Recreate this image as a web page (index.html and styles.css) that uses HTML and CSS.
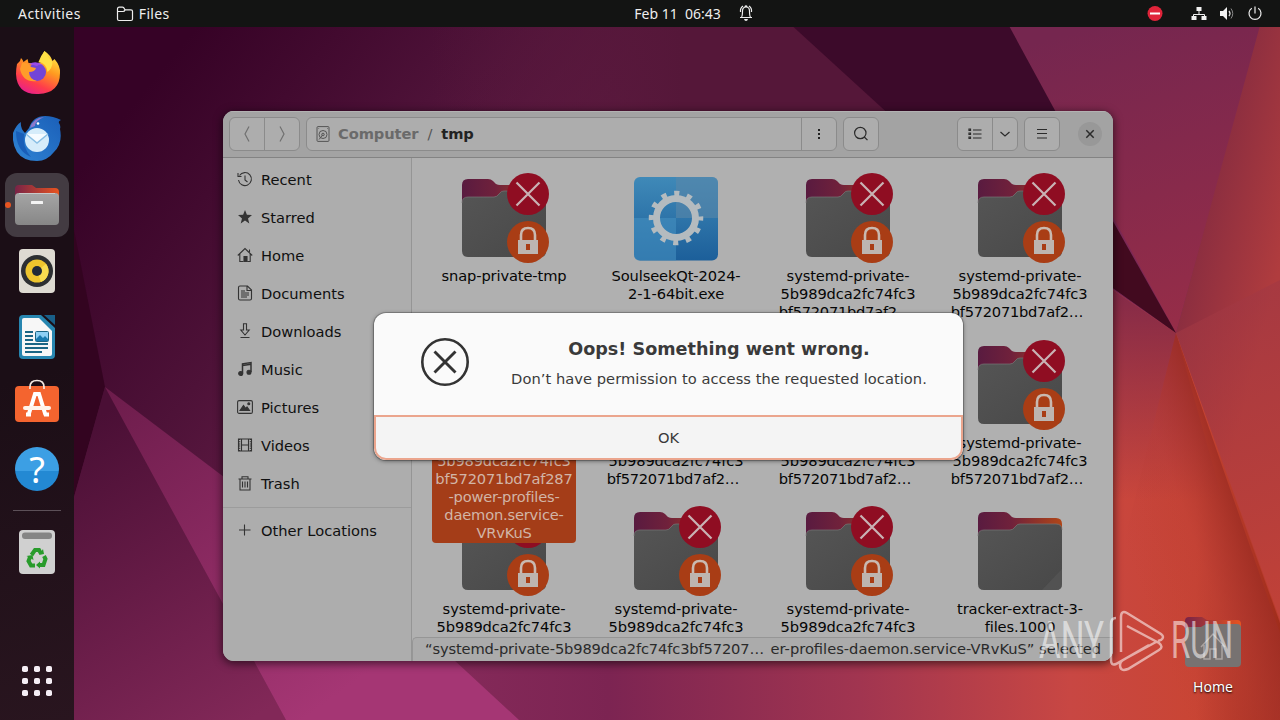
FILE: index.html
```
<!DOCTYPE html>
<html lang="en">
<head>
<meta charset="UTF-8">
<title>Files</title>
<link rel="stylesheet" href="styles.css">
</head>
<body>

<!-- shared icons -->
<svg class="defs" width="0" height="0">
	<defs>
		<linearGradient id="tab" x1="0" x2="1"><stop offset="0" stop-color="#591b40"/><stop offset=".4" stop-color="#70213b"/><stop offset="1" stop-color="#b04618"/></linearGradient>
		<linearGradient id="front" x1="0" y1="0" x2="1" y2="1"><stop offset="0" stop-color="#555"/><stop offset="1" stop-color="#484848"/></linearGradient>
		<linearGradient id="exebg" x1="0" y1="0" x2="0" y2="1"><stop offset="0" stop-color="#3f89b8"/><stop offset="1" stop-color="#1c5f9a"/></linearGradient>
		<linearGradient id="fox" x1=".8" y1="0" x2=".3" y2="1"><stop offset="0" stop-color="#fff04a"/><stop offset=".4" stop-color="#ff9a20"/><stop offset=".75" stop-color="#ff3d4a"/><stop offset="1" stop-color="#e8208a"/></linearGradient>
		<linearGradient id="bird" x1="1" y1="0" x2="0" y2="1"><stop offset="0" stop-color="#1b5fb8"/><stop offset="1" stop-color="#2f84d4"/></linearGradient>
		<linearGradient id="drawer" x1="0" y1="0" x2="0" y2="1"><stop offset="0" stop-color="#a5a5a5"/><stop offset="1" stop-color="#878787"/></linearGradient>
		<linearGradient id="drawertab" x1="0" x2="1"><stop offset="0" stop-color="#782347"/><stop offset="1" stop-color="#e85420"/></linearGradient>
	</defs>
	<symbol id="folder" viewBox="0 0 96 96">
		<path d="M6 15q0-6 6-6h20q3 0 5 2l3 3q2 1 4 1h40q6 0 6 6v20H6z" fill="url(#tab)"/>
		<path d="M6 33q0-6 6-6h26q3 0 5-3l1-1q1-2 4-2h36q6 0 6 6v54q0 6-6 6H12q-6 0-6-6z" fill="url(#front)"/>
		<path d="M90 66v15q0 6-6 6H70z" fill="#585858" opacity=".6"/>
		<path d="M6 33q0-6 6-6h26q3 0 5-3l1-1q1-2 4-2h36q6 0 6 6" fill="none" stroke="#777" stroke-width=".7"/>
	</symbol>
	<symbol id="locked" viewBox="0 0 96 96">
		<use href="#folder"/>
		<circle cx="72" cy="24" r="21" fill="#8f0d22"/>
		<path d="M60.500 12.500l23 23M83.500 12.500l-23 23" stroke="#c9b3b5" stroke-width="2.200"/>
		<circle cx="72" cy="72" r="21" fill="#a93d15"/>
		<path d="M65 72v-7q0-7 7-7t7 7v7" fill="none" stroke="#c9b9b0" stroke-width="2.600"/>
		<path fill-rule="evenodd" d="M62 70h20v14H62zM70 74v6h4v-6z" fill="#bdb5b0"/>
	</symbol>
	<symbol id="exe" viewBox="0 0 96 96">
		<rect x="6" y="7" width="84" height="83.500" rx="6" fill="url(#exebg)"/>
		<path d="M48 7h36q6 0 6 6v35H48z" fill="#5a87a8" opacity=".6"/>
		<path d="M6 48h42v42.500H12q-6 0-6-6z" fill="#458fc0" opacity=".6"/>
		<circle cx="48" cy="48" r="19.500" fill="none" stroke="#b4bbbf" stroke-width="7"/>
		<circle cx="48" cy="48" r="24.500" fill="none" stroke="#b4bbbf" stroke-width="5.500" stroke-dasharray="5.200 7.630" stroke-dashoffset="2.600"/>
	</symbol>
	<symbol id="recent" viewBox="0 0 16 16"><path d="M2.500 4.500A6.500 6.500 0 1 1 1.500 9M1 2v3.500h3.500M8 4.500V9l2.500 2"/></symbol>
	<symbol id="star" viewBox="0 0 16 16"><path fill="#333" stroke="none" d="M8 1l1.900 4.800 5.100.3-4 3.300 1.300 5L8 11.600l-4.300 2.800 1.300-5-4-3.300 5.100-.3z"/></symbol>
	<symbol id="house" viewBox="0 0 16 16"><path d="M.8 8.500L8 1.500l7.200 7M12.500 5V2.500M2.800 7v7.500H6.500M13.200 7v7.500h-3"/><path d="M7 9.500h3v5H7z" fill="#333"/></symbol>
	<symbol id="doc" viewBox="0 0 16 16"><path d="M1.500 2.500q0-1.500 1.500-1.500h7.500l4 4v8.500q0 1.500-1.500 1.500H3q-1.500 0-1.500-1.500zM10 1v4.500h4.500M4 6h4M4 8h8M4 10h8M4 12h6"/></symbol>
	<symbol id="down" viewBox="0 0 16 16"><path d="M6.500.8h3V7h2.700L8 12 3.800 7h2.700zM3.500 14.500h9"/></symbol>
	<symbol id="music" viewBox="0 0 16 16"><path d="M5.500 12.500V2.800L14 1.500v9.500M5.500 4.500L14 3.200" stroke-width="1.500"/><circle cx="3.700" cy="12.500" r="2" fill="#333"/><circle cx="12" cy="11.200" r="2" fill="#333"/></symbol>
	<symbol id="picture" viewBox="0 0 16 16"><rect x=".6" y="1.600" width="14.800" height="12.800" rx="1.500"/><path d="M3 11.500l3.500-5 2.200 3L10 8l2.500 3.500z" fill="#333"/><circle cx="11.800" cy="4.800" r="1" fill="#333"/></symbol>
	<symbol id="video" viewBox="0 0 16 16"><path d="M1.500 2h13v12h-13zM4.500 2v12M11.500 2v12M4.500 8h7"/><path d="M2.500 2v12M13.500 2v12" stroke-width="1.500" stroke-dasharray="1 1.200"/></symbol>
	<symbol id="bin" viewBox="0 0 16 16"><path d="M1.500 4h13M5 4V1.800h6V4M3 4v11h10V4M5.500 6.500v6M8 6.500v6M10.500 6.500v6"/></symbol>
	<symbol id="plus" viewBox="0 0 16 16"><path d="M7.500 2.500v11M2 8h11.500"/></symbol>
</svg>

<div class="screen">

	<svg class="wallpaper" viewBox="0 0 1280 720">
		<defs>
			<linearGradient id="w1" gradientUnits="userSpaceOnUse" x1="120" y1="120" x2="560" y2="480"><stop offset="0" stop-color="#360226"/><stop offset=".4" stop-color="#4e1238"/><stop offset="1" stop-color="#7c2856"/></linearGradient>
			<linearGradient id="w2" gradientUnits="userSpaceOnUse" x1="75" y1="430" x2="250" y2="720"><stop offset="0" stop-color="#4a0f35"/><stop offset="1" stop-color="#822858"/></linearGradient>
			<linearGradient id="w3" gradientUnits="userSpaceOnUse" x1="105" y1="387" x2="330" y2="700"><stop offset="0" stop-color="#6c1c4b"/><stop offset="1" stop-color="#a53674"/></linearGradient>
			<linearGradient id="w4" gradientUnits="userSpaceOnUse" x1="440" y1="0" x2="1280" y2="0"><stop offset="0" stop-color="#852a5a"/><stop offset=".2" stop-color="#7c2452"/><stop offset=".5" stop-color="#a13550"/><stop offset=".75" stop-color="#c84743"/><stop offset=".9" stop-color="#c94534"/><stop offset="1" stop-color="#a02d1c"/></linearGradient>
			<linearGradient id="w5" gradientUnits="userSpaceOnUse" x1="1080" y1="30" x2="1170" y2="330"><stop offset="0" stop-color="#75264f"/><stop offset="1" stop-color="#962d48"/></linearGradient>
			<linearGradient id="w6" gradientUnits="userSpaceOnUse" x1="1190" y1="200" x2="1290" y2="225"><stop offset="0" stop-color="#842b40"/><stop offset="1" stop-color="#b03c3e"/></linearGradient>
			<linearGradient id="w7" gradientUnits="userSpaceOnUse" x1="1130" y1="560" x2="1255" y2="515"><stop offset="0" stop-color="#b83c38" stop-opacity="0"/><stop offset=".5" stop-color="#b83c38" stop-opacity=".3"/><stop offset="1" stop-color="#982a1e"/></linearGradient>
			<linearGradient id="w8" gradientUnits="userSpaceOnUse" x1="0" y1="290" x2="0" y2="500"><stop offset="0" stop-color="#842a48"/><stop offset="1" stop-color="#842a48" stop-opacity="0"/></linearGradient>
			<linearGradient id="w9" gradientUnits="userSpaceOnUse" x1="1180" y1="330" x2="1280" y2="600"><stop offset="0" stop-color="#a23843"/><stop offset="1" stop-color="#c94434"/></linearGradient>
			<linearGradient id="w10" gradientUnits="userSpaceOnUse" x1="430" y1="27" x2="850" y2="27"><stop offset="0" stop-color="#551739" stop-opacity="0"/><stop offset=".6" stop-color="#551739"/><stop offset="1" stop-color="#551739"/></linearGradient>
		</defs>
		<rect width="1280" height="720" fill="url(#w1)"/>
		<path d="M400 0h400l160 140H300z" fill="url(#w10)"/>
		<path d="M764 0h261l100 330z" fill="#3c0a2a"/>
		<path d="M995 0h273l-92 333z" fill="url(#w5)"/>
		<path d="M1267 0h13v720L1176 333z" fill="url(#w6)"/>
		<path d="M440 290h673l63 43 104 287v100H519L380 610z" fill="url(#w4)"/>
		<path d="M1113 290l63 43 80 287h-156V290z" fill="url(#w8)"/>
		<path d="M1176 333l104 300v87h-200z" fill="url(#w7)"/>
		<path d="M1176 333L1280 280v343z" fill="url(#w9)" opacity=".6"/>
		<path d="M1070 145l106 188-76-54z" fill="#420a1f"/>
		<path d="M74 230l31 157-31 110z" fill="#330420"/>
		<path d="M105 387L74 497v223h212z" fill="url(#w2)"/>
		<path d="M105 387L400 610l119 110H286z" fill="url(#w3)"/>
	</svg>

	<div class="topbar">
		<div class="top-left">
			<span class="activities">Activities</span>
			<svg width="18" height="16" viewBox="0 0 18 16" class="line light"><path d="M1.500 13V3q0-1.800 1.800-1.800h3.200q1.300 0 1.700 1.300t1.600 1.300h5.200q1.500 0 1.500 1.500V13q0 1.500-1.500 1.500H3q-1.500 0-1.500-1.500zM1.500 5.500H7q1.500 0 2-1.500"/></svg>
			<span class="app-name">Files</span>
		</div>
		<div class="clock">
			<span>Feb 11&nbsp; 06:43</span>
			<svg width="16" height="18" viewBox="0 0 16 18" class="line light"><path d="M2 13.500h12M3.500 13q1-1 1-6 0-4 3.500-4t3.500 4q0 5 1 6M2.500 8q-.5-4 2.500-6M13.500 8q.5-4-2.500-6M6.800 2.500q1.200-1.500 2.400 0"/><path d="M6 15h4q-.5 2-2 2t-2-2z" fill="#eee" stroke="none"/></svg>
		</div>
		<div class="tray">
			<svg width="16" height="16" viewBox="0 0 16 16"><circle cx="8" cy="7.500" r="7.500" fill="#e0243a"/><path d="M3 7.500h10" stroke="#fff" stroke-width="2"/></svg>
			<svg class="net" width="16" height="16" viewBox="0 0 16 16"><path d="M8 5v4M2.500 11V8.500h11V11" fill="none" stroke="#eee"/><path d="M5.500 1h5v4h-5zM.5 10h5v4h-5zM10.500 10h5v4h-5z" fill="#f2f2f2"/></svg>
			<svg width="16" height="16" viewBox="0 0 16 16"><path d="M1 5h3l4-4v13l-4-4H1z" fill="#f2f2f2"/><path d="M10 5q2 2.500 0 5" fill="none" stroke="#ddd" stroke-width="1.300"/><path d="M12 2.500q3.500 5 0 10" fill="none" stroke="#888"/></svg>
			<svg width="16" height="16" viewBox="0 0 16 16" class="line light"><path d="M8 .5v7M4.800 2.300a6 6 0 1 0 6.400 0"/></svg>
		</div>
	</div>

	<div class="workspace">
		<div class="dock">
			<div class="launcher">
				<svg viewBox="0 0 48 48">
					<path d="M4 15l3-3 1-3q2 2 2.500 4l4-3 1 4h9l5-1q-1-7 2-11 6 4 8 10l2-2q6 7 5.500 14 0 20-21.500 21T3 25q0-5 1-10z" fill="url(#fox)"/>
					<circle cx="24" cy="23" r="9" fill="#7245d8"/>
					<path d="M16 15q7-4 14 1-4-1-6 1z" fill="#9a4be8"/>
					<path d="M9 14q6-1 9 4l5 1q-1 4-7 4 0 7 8 9-14 2-17-12z" fill="#ff9c2a"/>
					<path d="M31.500 2q-4 5-6 11 8 1 9 10 5-4 5-10-5-5-8-11z" fill="#ffe046"/>
				</svg>
			</div>
			<div class="launcher">
				<svg viewBox="0 0 48 48">
					<path d="M0 18q3-8 8-11-1 6 4 11l4-5Q20 1 32 1q8 0 16 4-3 1-2 3 2 3 1 6 3 14-6 23-7 9-17 9Q10 46 4 37-1 29 0 18z" fill="url(#bird)"/>
					<path d="M3 16q0 20 15 26-9-10-7-23z" fill="#195eb8"/>
					<circle cx="24" cy="25" r="12" fill="#d6ecfa"/>
					<path d="M13 19l11 9 11-9" fill="#f6fbff" stroke="#8abfe4" stroke-width="1.500"/>
					<path d="M17 13q3-10 14-11-9 4-9 9z" fill="#8d78cc"/><circle cx="25" cy="8.500" r="1.300" fill="#fff"/>
				</svg>
			</div>
			<div class="launcher active">
				<svg viewBox="0 0 48 48">
					<path d="M2 8q0-4 4-4h13l4 3h19q4 0 4 4v8H2z" fill="url(#drawertab)"/>
					<rect x="2" y="12" width="44" height="32" rx="4" fill="url(#drawer)"/>
					<path d="M6 12.500h36" stroke="#c8c8c8"/><rect x="18" y="20" width="12" height="3" rx=".5" fill="#f4f4f4"/>
				</svg>
			</div>
			<div class="launcher">
				<svg viewBox="0 0 48 48">
					<rect x="6" y="2" width="36" height="44" rx="4" fill="#dedad2"/>
					<circle cx="24" cy="24" r="16" fill="#2d2f32"/><circle cx="24" cy="24" r="11.500" fill="#eec52d"/>
					<path d="M24 24l9-7a11.500 11.500 0 0 1-5 18z" fill="#f8dc50"/><circle cx="24" cy="24" r="5" fill="#202a38"/>
				</svg>
			</div>
			<div class="launcher">
				<svg viewBox="0 0 48 48">
					<path d="M10 2h18l14 13v27q0 4-4 4H10q-4 0-4-4V6q0-4 4-4z" fill="#2786b0"/>
					<path d="M11 5h15l13 13v23q0 2-2 2H11q-2 0-2-2V7q0-2 2-2z" fill="#f7f7f7"/>
					<path d="M31 2h11v10z" fill="#195f88"/>
					<path d="M12 19h8M12 23h8M12 27h8M12 31h23M12 35h23M12 39h17" stroke="#1b6685" stroke-width="2"/>
					<rect x="22.500" y="18.500" width="13" height="10" rx="1" fill="#8ed0f4" stroke="#1b6685"/><path d="M23 28v-2l4-4 3 3 2-2 3 3v2z" fill="#197aae"/>
				</svg>
			</div>
			<div class="launcher">
				<svg viewBox="0 0 48 48">
					<rect x="2" y="7" width="44" height="36" rx="4" fill="#f4642f"/>
					<path d="M17 10V8q0-6.500 7-6.500T31 8v2" fill="none" stroke="#f3e8e0" stroke-width="1.700"/>
					<path d="M15.500 36L22 15h4l6.500 21M13 35.500h5M31 35.500h5" fill="none" stroke="#fff" stroke-width="4"/>
					<path d="M12 29h24" stroke="#fff4ec" stroke-width="4" stroke-linecap="round"/>
				</svg>
			</div>
			<div class="launcher help">
				<span class="help-icon">?</span>
			</div>
			<div class="dock-line"></div>
			<div class="launcher">
				<svg viewBox="0 0 48 48">
					<rect x="6" y="2" width="36" height="44" rx="4" fill="#d0d0d0"/><rect x="9" y="4.500" width="30" height="6.500" rx="3" fill="#858585"/>
					<g fill="none" stroke="#289b2b" stroke-width="4"><path d="M18.500 27l3.500-5h4l2 3.500M31 28l1.500 3-2 6h-4M22 37.500h-4l-2.500-4.500 1.500-4"/></g>
					<path d="M26 27l5-1-1-5zM27 33.500v7l-4-3.500zM13.500 28l6-1 1 5z" fill="#289b2b"/>
				</svg>
			</div>
			<div class="launcher apps">
				<svg viewBox="0 0 48 48" fill="#f5eef5">
					<g id="dots"><rect x="9" y="9" width="6" height="6" rx="1.800"/><rect x="21" y="9" width="6" height="6" rx="1.800"/><rect x="33" y="9" width="6" height="6" rx="1.800"/></g>
					<use href="#dots" y="12"/><use href="#dots" y="24"/>
				</svg>
			</div>
		</div>
	</div>

	<div class="home-link">
		<svg width="64" height="64" viewBox="0 0 64 64">
			<path d="M4 8q0-4 4-4h13l5 3h30q4 0 4 4v9H4z" fill="url(#drawertab)"/>
			<path d="M4 18q0-4 4-4h12l5-3h31q4 0 4 4v35q0 4-4 4H8q-4 0-4-4z" fill="#777271"/>
			<path d="M20 34l12-13 12 13M23 32v14h6V36h6v10h6V32" fill="none" stroke="#aaa4a1" stroke-width="1.500"/>
		</svg>
		<span>Home</span>
	</div>

	<div class="window">
		<div class="header">
			<div class="group nav">
				<span class="btn"><svg width="16" height="18" viewBox="0 0 16 18" class="line dim"><path d="M10 1.500L6 9l4 7.500"/></svg></span>
				<span class="btn"><svg width="16" height="18" viewBox="0 0 16 18" class="line dim"><path d="M6 1.500L10 9l-4 7.500"/></svg></span>
			</div>
			<div class="group path">
				<div class="crumbs">
					<svg width="16" height="16" viewBox="0 0 16 16" class="line disk"><rect x="2" y=".6" width="12" height="14.800" rx="1"/><circle cx="8" cy="8.500" r="4"/><circle cx="8" cy="8.500" r="1.300"/><path d="M4 13.500l4-5M3.500 2.500h.6M12 2.500h.6"/></svg>
					<span class="parent">Computer</span><span class="slash">/</span><span class="current">tmp</span>
				</div>
				<span class="btn"><svg width="4" height="12" viewBox="0 0 4 12" fill="#222"><path d="M1 1h2v2H1zM1 5h2v2H1zM1 9h2v2H1z"/></svg></span>
			</div>
			<div class="group search"><span class="btn"><svg width="16" height="16" viewBox="0 0 16 16" class="line"><circle cx="7.300" cy="7" r="5.700"/><path d="M11.300 11l3.200 3.200"/></svg></span></div>
			<div class="group view">
				<span class="btn"><svg width="14" height="12" viewBox="0 0 14 12" class="line"><path d="M5 2h8.500M5 6h8.500M5 10h8.500M1 1h1.500v1.500H1zM1 5h1.500v1.500H1zM1 9h1.500v1.500H1z"/></svg></span>
				<span class="btn narrow"><svg width="12" height="8" viewBox="0 0 12 8" class="line"><path d="M1.500 2L6 6l4.500-4"/></svg></span>
			</div>
			<div class="group menu"><span class="btn"><svg width="12" height="12" viewBox="0 0 12 12" class="line"><path d="M1 1.500h10M1 5.500h10M1 10h10"/></svg></span></div>
			<div class="close"><svg width="10" height="10" viewBox="0 0 10 10" class="line"><path d="M1.300 1.300l7.400 7.400M8.700 1.300L1.300 8.700" stroke-width="1.500"/></svg></div>
		</div>

		<div class="content">
			<div class="sidebar">
				<div class="place"><svg><use href="#recent"/></svg>Recent</div>
				<div class="place"><svg><use href="#star"/></svg>Starred</div>
				<div class="place"><svg><use href="#house"/></svg>Home</div>
				<div class="place"><svg><use href="#doc"/></svg>Documents</div>
				<div class="place"><svg><use href="#down"/></svg>Downloads</div>
				<div class="place"><svg><use href="#music"/></svg>Music</div>
				<div class="place"><svg><use href="#picture"/></svg>Pictures</div>
				<div class="place"><svg><use href="#video"/></svg>Videos</div>
				<div class="place"><svg><use href="#bin"/></svg>Trash</div>
				<div class="side-line"></div>
				<div class="place"><svg><use href="#plus"/></svg>Other Locations</div>
			</div>

			<div class="files">
				<div class="file"><svg><use href="#locked"/></svg><div class="name">snap-private-tmp</div></div>
				<div class="file"><svg><use href="#exe"/></svg><div class="name">SoulseekQt-2024-<br>2-1-64bit.exe</div></div>
				<div class="file"><svg><use href="#locked"/></svg><div class="name">systemd-private-<br>5b989dca2fc74fc3<br><span class="cut">bf572071bd7af2…</span></div></div>
				<div class="file"><svg><use href="#locked"/></svg><div class="name">systemd-private-<br>5b989dca2fc74fc3<br><span class="cut">bf572071bd7af2…</span></div></div>

				<div class="file selected"><svg><use href="#locked"/></svg><div class="name">systemd-private-<br>5b989dca2fc74fc3<br>bf572071bd7af287<br>-power-profiles-<br>daemon.service-<br>VRvKuS</div></div>
				<div class="file"><svg><use href="#locked"/></svg><div class="name">systemd-private-<br>5b989dca2fc74fc3<br><span class="cut">bf572071bd7af2…</span></div></div>
				<div class="file"><svg><use href="#locked"/></svg><div class="name">systemd-private-<br>5b989dca2fc74fc3<br><span class="cut">bf572071bd7af2…</span></div></div>
				<div class="file"><svg><use href="#locked"/></svg><div class="name">systemd-private-<br>5b989dca2fc74fc3<br><span class="cut">bf572071bd7af2…</span></div></div>

				<div class="file"><svg><use href="#locked"/></svg><div class="name">systemd-private-<br>5b989dca2fc74fc3</div></div>
				<div class="file"><svg><use href="#locked"/></svg><div class="name">systemd-private-<br>5b989dca2fc74fc3</div></div>
				<div class="file"><svg><use href="#locked"/></svg><div class="name">systemd-private-<br>5b989dca2fc74fc3</div></div>
				<div class="file"><svg><use href="#folder"/></svg><div class="name">tracker-extract-3-<br>files.1000</div></div>
			</div>
			<div class="status"><span class="start">“systemd-private-5b989dca2fc74fc3bf57207…</span><span>er-profiles-daemon.service-VRvKuS” selected</span></div>
		</div>
	</div>

	<div class="dialog">
		<div class="message">
			<svg width="48" height="48" viewBox="0 0 48 48" fill="none" stroke="#333"><circle cx="24" cy="24" r="22.700" stroke-width="2.600"/><path d="M13.500 13.500l21 21M34.500 13.500l-21 21" stroke-width="2.900"/></svg>
			<div class="message-text">
				<h1>Oops! Something went wrong.</h1>
				<p>Don’t have permission to access the requested location.</p>
			</div>
		</div>
		<div class="ok">OK</div>
	</div>

	<svg class="watermark" width="200" height="66" viewBox="0 0 200 66">
		<text x="2" y="50" textLength="65" lengthAdjust="spacingAndGlyphs">ANY</text>
		<text x="134" y="50" textLength="62" lengthAdjust="spacingAndGlyphs">RUN</text>
		<path d="M79 10q-5 0-5 6v36q0 6 5 4l33-19M84 44V9q0-7 6-4l34 21q4 3 0 6l-3 1M90 18l32 17q5 4 0 7L91 61q-8 3-8-4 0-3 3-5l33-18"/>
	</svg>
</div>
</body>
</html>
```

FILE: styles.css
```
body {margin:0; font-family:"DejaVu Sans", sans-serif; font-size:14.67px;}
.defs {position:absolute;}
.screen {position:relative; width:1280px; height:720px; overflow:hidden; display:flex; flex-direction:column;}
.wallpaper {position:absolute; top:0; left:0; width:1280px; height:720px;}
.line {fill:none; stroke:#2b2b2b; stroke-width:1.2;}
.light {stroke:#eee;}
.dim {stroke:#707070;}
.disk {stroke:#555; stroke-width:1;}

/* top bar */
.topbar {position:relative; height:27px; background:#131413; color:#eee; font-family:"Noto Sans", sans-serif; font-size:14px; display:grid; grid-template-columns:1fr auto 1fr; align-items:center;}
.top-left {display:flex; align-items:center; padding-left:18px;}
.activities {margin-right:35px; letter-spacing:.45px;}
.app-name {margin-left:5px; letter-spacing:.3px;}
.clock {display:flex; align-items:center; gap:17px; height:26px; margin:0 0 1px 108px;}
.tray {display:flex; align-items:center; justify-content:flex-end; gap:12px; padding-right:17px;}
.net {margin-left:16px;}

/* dock */
.workspace {position:relative; flex:1; display:flex;}
.dock {width:74px; box-sizing:border-box; padding:14px 5px 7px; background:linear-gradient(165deg, #1b0e16 50%, #29151f); display:flex; flex-direction:column; gap:2px;}
.launcher {position:relative; height:64px; display:flex; align-items:center; justify-content:center;}
.launcher svg {width:48px; height:48px;}
.active {background:#433b42; border-radius:12px;}
.active::before {content:""; position:absolute; left:0; top:29px; width:6px; height:6px; border-radius:3px; background:#e95420;}
.help-icon {width:44px; height:44px; border-radius:22px; background:linear-gradient(#3c9fe4 54%, #2389d3 54%); color:#fff; font:36px/45px "Noto Sans", sans-serif; text-align:center;}
.dock-line {height:1px; margin:7px 8px; background:#5c5058;}
.apps {margin-top:auto;}

.home-link {position:absolute; left:1181px; top:613px; width:64px; display:flex; flex-direction:column; align-items:center; color:#fff; font:14px/20px "Noto Sans", sans-serif; text-shadow:0 1px 2px #000;}

/* files window */
.window {position:absolute; z-index:1; left:223px; top:111px; width:890px; height:550px; display:flex; flex-direction:column; border-radius:11px; overflow:hidden; background:#aeaeae; color:#101010; box-shadow:0 2px 9px 1px rgba(0,0,0,.55);}
.header {height:47px; box-sizing:border-box; padding:0 11px 0 6px; background:#a3a3a3; border-bottom:1px solid #838383; box-shadow:inset 0 1px #b2b2b2; display:flex; align-items:center;}
.group {height:34px; box-sizing:border-box; border:1px solid #8b8b8b; border-radius:6px; background:#adadad; display:flex; margin-right:6px;}
.btn {width:34px; display:flex; align-items:center; justify-content:center;}
.btn + .btn, .crumbs + .btn {border-left:1px solid #8b8b8b;}
.narrow {width:24px;}
.path {width:531px;}
.crumbs {flex:1; display:flex; align-items:center; padding:0 0 1px 8px; font-weight:bold; letter-spacing:-.1px; color:#6a6a6a;}
.parent {margin-left:7px;}
.slash {font-weight:normal; margin:0 9px; color:#555;}
.current {color:#222;}
.view {margin-left:72px;}
.close {width:24px; height:24px; margin-left:auto; border-radius:12px; background:#989898; display:flex; align-items:center; justify-content:center;}
.content {position:relative; flex:1; display:flex; min-height:0;}
.sidebar {width:188px; padding-top:2px; border-right:1px solid #959595; background:#adadad;}
.place {height:38px; display:flex; align-items:center; gap:8px; padding-left:14px;}
.place svg {width:16px; height:16px; fill:none; stroke:#333; stroke-width:1.1;}
.side-line {height:1px; margin:5px 0 3px; background:#9c9c9c;}
.files {flex:1; padding:12px 0 0 6px; display:grid; grid-template-columns:repeat(4, 172px); grid-template-rows:167px 166px 166px; background:#b0b0b0;}
.file {display:flex; flex-direction:column; align-items:center; height:0;}
.file svg {width:96px; height:96px; flex:none;}
.name {margin-top:1px; line-height:18px; text-align:center; white-space:nowrap; letter-spacing:-.12px; color:#060606;}
.cut {margin-right:6px; letter-spacing:-.26px;}
.selected {position:relative; z-index:1;}
.selected .name {width:144px; background:#a43d18; color:#d2b5a7; border-radius:4px; padding-bottom:1px; letter-spacing:-.2px;}
.status {position:absolute; z-index:2; left:189px; right:0; bottom:0; height:24px; box-sizing:border-box; padding:0 12px 2px; border:1px solid #969696; border-width:1px 0 0 1px; border-radius:5px 0 0 0; background:#ababab; color:#2a2a2a; display:flex; justify-content:space-between; align-items:center; white-space:nowrap;}
.start {letter-spacing:-.14px;}

/* error dialog */
.dialog {position:absolute; z-index:2; left:374px; top:313px; width:589px; height:147px; display:flex; flex-direction:column; border-radius:12px; overflow:hidden; background:#fafafa; color:#3a3a3a; box-shadow:0 0 0 1px rgba(0,0,0,.2), 0 1px 4px rgba(0,0,0,.5);}
.message {height:102px; display:flex; padding:0 36px 0 47px; align-items:flex-start;}
.message svg {margin-top:25px;}
.message-text {flex:1; margin-left:42px; text-align:center; white-space:nowrap;}
h1 {margin:25px 0 8px; font-size:17.6px; line-height:22px;}
p {margin:0; line-height:22px; letter-spacing:.04px;}
.ok {flex:1; box-sizing:border-box; border:2px solid #eba58d; border-radius:0 0 12px 12px; background:#f4f4f4; display:flex; align-items:center; justify-content:center;}

.watermark {position:absolute; z-index:3; left:1037px; top:608px; overflow:visible; fill:none; stroke:#fff; stroke-opacity:.55; stroke-width:2.5;}
.watermark text {font-family:Roboto, sans-serif; font-size:51px; font-weight:400; fill:#fff; fill-opacity:.55; stroke:none;}
```
